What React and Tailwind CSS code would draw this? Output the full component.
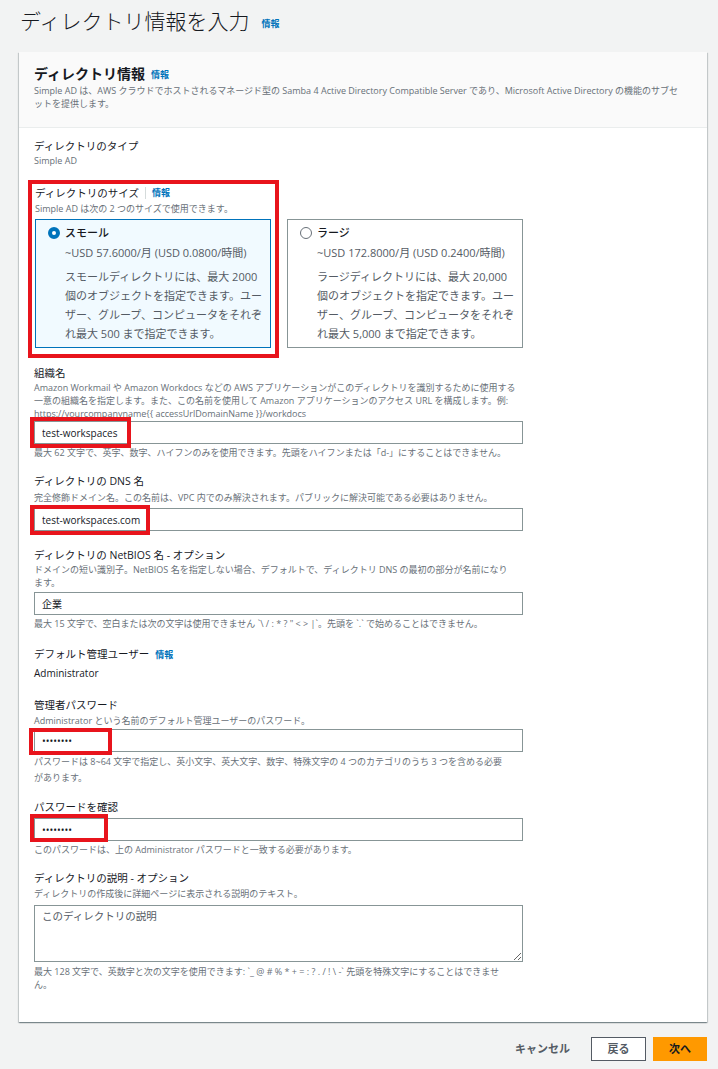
import React from 'react'

const font = { fontFamily: '"Open Sans", "Noto Sans CJK JP", sans-serif' }

const Info = ({ className = '' }) => (
  <span className={`text-[9px] font-bold text-[#0073bb] ${className}`}>情報</span>
)

const Label = ({ children, className = '' }) => (
  <div className={`text-[10.5px] leading-[15px] text-[#16191f] ${className}`}>{children}</div>
)

const Desc = ({ children, className = '' }) => (
  <div className={`whitespace-nowrap text-[9px] leading-[13px] text-[#687078] ${className}`}>{children}</div>
)

const Field = ({ value, type = 'text', mark, className = '' }) => (
  <div className={`relative w-[489px] ${className}`}>
    <input
      readOnly
      type={type}
      value={value}
      className="block h-[23px] w-full border border-[#879596] bg-white px-[7px] text-[10px] text-[#16191f] outline-none"
      style={font}
    />
    {mark && <div className={`pointer-events-none absolute border-4 border-[#e8141c] ${mark}`} />}
  </div>
)

const Radio = ({ checked }) =>
  checked ? (
    <span className="mt-[3px] block h-[12px] w-[12px] shrink-0 rounded-full border-4 border-[#0073bb] bg-white" />
  ) : (
    <span className="mt-[3px] block h-[12px] w-[12px] shrink-0 rounded-full border border-[#687078] bg-white" />
  )

const SizeTile = ({ checked, title, price, lines, className = '' }) => (
  <div
    className={`flex h-[129px] w-[236px] gap-[5px] border pl-[12px] pt-[4px] ${
      checked ? 'border-[#0073bb] bg-[#f1faff]' : 'border-[#879596] bg-white'
    } ${className}`}
  >
    <Radio checked={checked} />
    <div className="whitespace-nowrap text-[#545b64]">
      <div className="text-[11px] font-medium leading-[18px] text-[#16191f]">{title}</div>
      <div className="mt-[2px] text-[11px] leading-[18px]">{price}</div>
      <div className="mt-[5px] text-[11px] leading-[19px]">
        {lines.map((l) => (
          <div key={l}>{l}</div>
        ))}
      </div>
    </div>
  </div>
)

export default function App() {
  return (
    <div className="min-h-[1069px] bg-[#f2f3f3] pb-[9px]" style={font}>
      {/* Page title */}
      <div className="flex h-[40px] items-center pl-[20px] pt-[1px]">
        <h1 className="text-[21px] font-light leading-[28px] text-[#16191f]">ディレクトリ情報を入力</h1>
        <Info className="ml-[12px] mt-[6px]" />
      </div>

      {/* Card */}
      <div className="ml-[19px] mt-[12px] w-[688px] bg-white shadow-[0_1px_1px_0_rgba(0,28,36,0.3),1px_1px_1px_0_rgba(0,28,36,0.15),-1px_1px_1px_0_rgba(0,28,36,0.15)]">
        <div className="border-b border-[#eaeded] bg-[#fafafa] px-[15px] pb-[17px] pt-[12px]">
          <div className="flex items-center">
            <h2 className="text-[14px] font-bold leading-[20px] text-[#16191f]">ディレクトリ情報</h2>
            <Info className="ml-[6px] mt-[1px]" />
          </div>
          <Desc>
            Simple AD は、AWS クラウドでホストされるマネージド型の Samba 4 Active Directory Compatible Server であり、Microsoft Active
            Directory の機能のサブセ
            <br />
            ットを提供します。
          </Desc>
        </div>

        <div className="px-[15px] pb-[31px] pt-[10px]">
          <Label className="leading-[16px]">ディレクトリのタイプ</Label>
          <Desc className="leading-[14px]">Simple AD</Desc>

          {/* Size */}
          <div className="mt-[12px] flex items-end">
            <div className="-ml-[6px] border-4 border-[#e8141c] pb-[6px] pl-[3px] pr-[4px] pt-[1px]">
              <div className="flex items-center">
                <Label className="leading-[16px]">ディレクトリのサイズ</Label>
                <span className="mx-[6px] h-[12px] w-px bg-[#d5dbdb]" />
                <Info />
              </div>
              <Desc className="mt-[1px]">Simple AD は次の 2 つのサイズで使用できます。</Desc>
              <SizeTile
                checked
                className="mt-[4px]"
                title="スモール"
                price="~USD 57.6000/月 (USD 0.0800/時間)"
                lines={[
                  'スモールディレクトリには、最大 2000',
                  '個のオブジェクトを指定できます。ユー',
                  'ザー、グループ、コンピュータをそれぞ',
                  'れ最大 500 まで指定できます。',
                ]}
              />
            </div>
            <SizeTile
              className="mb-[10px] ml-[8px]"
              title="ラージ"
              price="~USD 172.8000/月 (USD 0.2400/時間)"
              lines={[
                'ラージディレクトリには、最大 20,000',
                '個のオブジェクトを指定できます。ユー',
                'ザー、グループ、コンピュータをそれぞ',
                'れ最大 5,000 まで指定できます。',
              ]}
            />
          </div>

          {/* Organization */}
          <Label className="mt-[8px]">組織名</Label>
          <Desc className="leading-[12.5px]">
            Amazon Workmail や Amazon Workdocs などの AWS アプリケーションがこのディレクトリを識別するために使用する
            <br />
            一意の組織名を指定します。また、この名前を使用して Amazon アプリケーションのアクセス URL を構成します。例:
            <br />
            https://yourcompanyname{'{{'} accessUrlDomainName {'}}'}/workdocs
          </Desc>
          <Field className="mt-[1px]" value="test-workspaces" mark="-left-[4px] -top-[4px] h-[31px] w-[101px]" />
          <Desc className="mt-[2px]">
            最大 62 文字で、英字、数字、ハイフンのみを使用できます。先頭をハイフンまたは「d-」にすることはできません。
          </Desc>

          {/* DNS */}
          <Label className="mt-[15px]">ディレクトリの DNS 名</Label>
          <Desc className="mt-[2px]">
            完全修飾ドメイン名。この名前は、VPC 内でのみ解決されます。パブリックに解決可能である必要はありません。
          </Desc>
          <Field className="mt-[4px]" value="test-workspaces.com" mark="-left-[4px] -top-[3px] h-[30px] w-[120px]" />

          {/* NetBIOS */}
          <Label className="mt-[17px]">ディレクトリの NetBIOS 名 - オプション</Label>
          <Desc>
            ドメインの短い識別子。NetBIOS 名を指定しない場合、デフォルトで、ディレクトリ DNS の最初の部分が名前になり
            <br />
            ます。
          </Desc>
          <Field className="mt-[3px]" value="企業" />
          <Desc className="mt-[2px]">
            最大 15 文字で、空白または次の文字は使用できません `\ / : * ? " &lt; &gt; |`。先頭を `.` で始めることはできません。
          </Desc>

          {/* Default admin */}
          <div className="mt-[17px] flex items-center">
            <Label>デフォルト管理ユーザー</Label>
            <Info className="ml-[6px]" />
          </div>
          <div className="mt-[3px] text-[10px] leading-[16px] text-[#16191f]">Administrator</div>

          {/* Admin password */}
          <Label className="mt-[17px]">管理者パスワード</Label>
          <Desc className="mt-[1px]">Administrator という名前のデフォルト管理ユーザーのパスワード。</Desc>
          <Field
            className="mt-[2px]"
            type="password"
            value="abcdefgh"
            mark="-left-[5px] -top-[1px] h-[27px] w-[83px]"
          />
          <Desc className="mt-[2px] leading-[16px]">
            パスワードは 8~64 文字で指定し、英小文字、英大文字、数字、特殊文字の 4 つのカテゴリのうち 3 つを含める必要
            <br />
            があります。
          </Desc>

          {/* Confirm */}
          <Label className="mt-[14px]">パスワードを確認</Label>
          <Field
            className="mt-[3px]"
            type="password"
            value="abcdefgh"
            mark="-left-[4px] -top-[4px] h-[28px] w-[78px]"
          />
          <Desc className="mt-[2px]">このパスワードは、上の Administrator パスワードと一致する必要があります。</Desc>

          {/* Description */}
          <Label className="mt-[15px]">ディレクトリの説明 - オプション</Label>
          <Desc className="mt-[1px]">ディレクトリの作成後に詳細ページに表示される説明のテキスト。</Desc>
          <textarea
            readOnly
            placeholder="このディレクトリの説明"
            className="mt-[5px] block h-[57px] w-[489px] border border-[#879596] bg-white px-[7px] py-[3px] text-[10.5px] text-[#16191f] outline-none placeholder:text-[#545b64]"
            style={font}
          />
          <Desc className="mt-[3px]">
            最大 128 文字で、英数字と次の文字を使用できます: `_ @ # % * + = : ? . / ! \ -` 先頭を特殊文字にすることはできませ
            <br />
            ん。
          </Desc>
        </div>
      </div>

      {/* Actions */}
      <div className="mr-[11px] mt-[15px] flex items-center justify-end">
        <span className="mr-[21px] text-[11px] font-bold text-[#545b64]">キャンセル</span>
        <button className="h-[24px] w-[55px] border border-[#545b64] bg-white text-[11px] font-bold text-[#545b64]">
          戻る
        </button>
        <button className="ml-[7px] h-[24px] w-[54px] bg-[#ff9900] text-[11px] font-bold text-[#16191f]">次へ</button>
      </div>
    </div>
  )
}
